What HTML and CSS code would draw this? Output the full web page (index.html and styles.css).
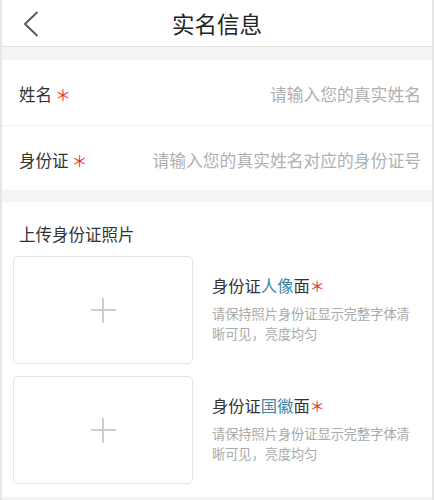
FILE: index.html
```html
<!DOCTYPE html>
<html lang="zh-CN">
<head>
<meta charset="utf-8">
<link rel="stylesheet" href="styles.css">
</head>
<body>
<div class="page">
  <header class="nav">
    <div class="nav-left">
      <svg class="back" width="16" height="26" viewBox="0 0 16 26"><path d="M14 1.5 L2 13 L14 24.5" fill="none" stroke="#555" stroke-width="1.8" stroke-linecap="round" stroke-linejoin="round"/></svg>
    </div>
    <h1 class="nav-title">实名信息</h1>
    <div></div>
  </header>
  <div class="band band-top"></div>
  <div class="form">
    <div class="row">
      <span class="label">姓名<span class="req">＊</span></span>
      <span class="placeholder">请输入您的真实姓名</span>
    </div>
    <div class="row row-sep">
      <span class="label">身份证<span class="req">＊</span></span>
      <span class="placeholder">请输入您的真实姓名对应的身份证号</span>
    </div>
  </div>
  <div class="band band-mid"></div>
  <section class="upload">
    <h2 class="upload-title">上传身份证照片</h2>
    <div class="item">
      <div class="pick"><span class="plus"></span></div>
      <div class="info">
        <div class="info-title">身份证<span class="hl">人像</span>面<span class="req2">＊</span></div>
        <p class="info-desc">请保持照片身份证显示完整字体清晰可见，亮度均匀</p>
      </div>
    </div>
    <div class="item">
      <div class="pick"><span class="plus"></span></div>
      <div class="info">
        <div class="info-title">身份证<span class="hl">国徽</span>面<span class="req2">＊</span></div>
        <p class="info-desc">请保持照片身份证显示完整字体清晰可见，亮度均匀</p>
      </div>
    </div>
  </section>
  <div class="band band-bottom"></div>
</div>
</body>
</html>
```
FILE: styles.css
```css
* { box-sizing: border-box; }
html, body { margin: 0; padding: 0; background: #fff; }
body {
  font-family: "Noto Sans CJK SC", "Noto Sans", sans-serif;
  color: #333;
}
.page {
  width: 434px;
  height: 500px;
  overflow: hidden;
  border-left: 2px solid #e6e6e6;
  border-right: 2px solid #e6e6e6;
  background: #fff;
}
.nav {
  height: 47px;
  display: grid;
  grid-template-columns: 1fr auto 1fr;
  align-items: center;
  border-bottom: 1px solid #e4e4e4;
  background: #fff;
}
.nav-left { display: flex; align-items: center; padding-left: 21px; padding-top: 1px; }
.back { display: block; }
.nav-title {
  margin: 0;
  font-size: 22.5px;
  font-weight: 400;
  color: #222;
  line-height: 30px;
  padding-bottom: 1px;
}
.band { background: #f4f4f4; }
.band-top { height: 13px; }
.band-mid { height: 12px; }
.band-bottom { height: 10px; }
.row {
  height: 65px;
  display: flex;
  align-items: center;
  justify-content: space-between;
  padding: 3px 11px 0 17px;
  font-size: 16.5px;
}
.row-sep { border-top: 1px solid #f0f0f0; }
.label { color: #333; display: flex; align-items: center; }
.req { color: #e53935; font-size: 16px; margin-left: 3px; }
.placeholder { color: #b0b0b0; font-size: 16.8px; }
.upload { padding: 20px 0 13px 11px; }
.upload-title {
  margin: 0 0 10px 6px;
  font-size: 16.5px;
  font-weight: 400;
  line-height: 24px;
  color: #333;
}
.item { display: flex; align-items: flex-start; }
.item + .item { margin-top: 12px; }
.pick {
  width: 180px;
  height: 108px;
  border: 1px solid #e6e6e6;
  border-radius: 5px;
  display: flex;
  align-items: center;
  justify-content: center;
  flex: none;
}
.plus { position: relative; width: 25px; height: 25px; display: block; }
.plus::before, .plus::after {
  content: "";
  position: absolute;
  background: #cdcdcd;
}
.plus::before { left: 0; right: 0; top: 11.5px; height: 2px; }
.plus::after { top: 0; bottom: 0; left: 11.5px; width: 2px; }
.info { margin-left: 19px; padding-top: 17px; width: 207px; }
.info-title { font-size: 16.3px; line-height: 24px; color: #333; }
.hl { color: #3a86a8; }
.req2 { color: #e53935; font-size: 15px; }
.info-desc {
  margin: 6px 0 0;
  font-size: 13.2px;
  line-height: 19.5px;
  color: #aaa;
}
```
